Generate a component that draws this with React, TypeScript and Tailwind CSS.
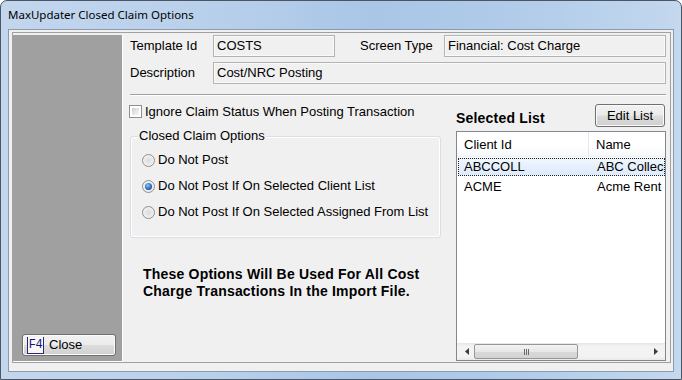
import React from 'react';

const btnClass =
  'rounded-[3px] border border-[#707070] bg-[linear-gradient(180deg,#f2f2f2_0%,#ebebeb_48%,#dddddd_52%,#cfcfcf_100%)] shadow-[inset_0_0_0_1px_#fbfbfb]';

const Field: React.FC<{ value?: string; width: string }> = ({ value = '', width }) => (
  <div
    className={`${width} h-[22px] border border-[#b3b3b3] bg-[#f0f0f0] pl-[3px] text-[13px] leading-[20px] text-black shadow-[inset_0_0_0_1px_#fafafa] whitespace-nowrap overflow-hidden`}
  >
    {value}
  </div>
);

const Radio: React.FC<{ checked?: boolean }> = ({ checked }) => (
  <span className="flex h-[13px] w-[13px] shrink-0 items-center justify-center rounded-full border border-[#8e8f8f] bg-[radial-gradient(circle_at_50%_50%,#dcdcdc_0%,#ececec_55%,#fbfbfb_100%)]">
    {checked && (
      <span className="h-[7px] w-[7px] rounded-full bg-[radial-gradient(circle_at_40%_35%,#8cc4f7_0%,#2a6fc2_55%,#0c3775_100%)]" />
    )}
  </span>
);

const Checkbox: React.FC = () => (
  <span className="flex h-[13px] w-[13px] shrink-0 border border-[#8e8f8f] bg-white p-[2px]">
    <span className="h-full w-full bg-[linear-gradient(135deg,#cbcfd5_0%,#e6e8eb_60%,#f4f5f6_100%)]" />
  </span>
);

const ArrowLeft = () => (
  <svg width="4" height="7" viewBox="0 0 4 7">
    <path d="M4 0 L0 3.5 L4 7 Z" fill="#3c3c3c" />
  </svg>
);

const ArrowRight = () => (
  <svg width="4" height="7" viewBox="0 0 4 7">
    <path d="M0 0 L4 3.5 L0 7 Z" fill="#3c3c3c" />
  </svg>
);

const options = [
  { label: 'Do Not Post', checked: false },
  { label: 'Do Not Post If On Selected Client List', checked: true },
  { label: 'Do Not Post If On Selected Assigned From List', checked: false },
];

const clients = [
  { id: 'ABCCOLL', name: 'ABC Collec', selected: true },
  { id: 'ACME', name: 'Acme Rent', selected: false },
];

export default function App() {
  return (
    <div className="flex h-[380px] w-[682px] flex-col overflow-hidden rounded-t-[7px] border border-[#4b5563] bg-[linear-gradient(90deg,#c2d6ee_0%,#b9d0eb_30%,#a9c6e7_55%,#b3cdea_80%,#c4d8ee_100%)] px-[7px] pb-[7px] font-['Liberation_Sans',Arial,sans-serif] text-[13px] text-black">
      {/* Title bar */}
      <div className="flex h-[28px] shrink-0 items-center font-['Noto_Sans',sans-serif] text-[11.5px] leading-none text-black">
        MaxUpdater Closed Claim Options
      </div>

      {/* Client area */}
      <div className="flex flex-1 flex-col border border-[#8d9aab] bg-[#f0f0f0] pb-[8px] pl-[3px] pr-[2px] pt-[2px]">
        <div className="flex flex-1 border border-[#a0a0a0] bg-[#f0f0f0]">
          {/* Left gray column */}
          <div className="mt-[2px] flex w-[110px] flex-col justify-end border-b border-r border-white bg-[#a0a0a0] pb-[5px] pl-[9px]">
            <button className={`${btnClass} flex h-[22px] w-[94px] items-center pl-[4px] text-[13px]`}>
              <span className="flex h-[17px] w-[17px] items-center justify-center border-x border-b border-[#2a2a6a] bg-[#f6f6fb] font-['Liberation_Mono',monospace] text-[12px] leading-none tracking-[-0.5px] text-[#14146e]">
                F4
              </span>
              <span className="ml-[5px]">Close</span>
            </button>
          </div>

          {/* Right content */}
          <div className="flex flex-1 flex-col pl-[7px]">
            <div className="mt-[2px] flex h-[22px] items-center">
              <span className="w-[83px]">Template Id</span>
              <Field value="COSTS" width="w-[122px]" />
              <span className="ml-[25px] w-[84px]">Screen Type</span>
              <Field value="Financial: Cost Charge" width="w-[222px]" />
            </div>
            <div className="mt-[5px] flex h-[22px] items-center">
              <span className="w-[83px]">Description</span>
              <Field value="Cost/NRC Posting" width="w-[453px]" />
            </div>
            <div className="mt-[10px] w-[536px] border-b border-t border-b-white border-t-[#a0a0a0]" />

            <div className="flex">
              {/* Options column */}
              <div className="flex w-[311px] flex-col">
                <label className="-ml-[1px] mt-[9px] flex h-[13px] items-center gap-[3px] leading-none">
                  <Checkbox />
                  <span>Ignore Claim Status When Posting Transaction</span>
                </label>

                <div className="relative mt-[18px] h-[102px] rounded-[3px] border border-[#d5dfe5] pl-[11px] pt-[10px] shadow-[inset_0_0_0_1px_#ffffff]">
                  <span className="absolute -top-[9px] left-[7px] bg-[#f0f0f0] px-[1px] leading-[16px]">
                    Closed Claim Options
                  </span>
                  {options.map((o) => (
                    <div key={o.label} className="flex h-[26px] items-center gap-[3px]">
                      <Radio checked={o.checked} />
                      <span>{o.label}</span>
                    </div>
                  ))}
                </div>

                <p className="ml-[13px] mt-[28px] text-[14px] font-bold leading-[17px] tracking-[0.2px]">
                  These Options Will Be Used For All Cost
                  <br />
                  Charge Transactions In the Import File.
                </p>
              </div>

              {/* Selected list column */}
              <div className="ml-[15px] flex w-[210px] flex-col">
                <div className="mt-[8px] flex items-start justify-between">
                  <span className="mt-[6px] text-[14px] font-bold leading-[16px] tracking-[0.2px]">Selected List</span>
                  <button className={`${btnClass} mr-[1px] h-[23px] w-[70px] text-[13px]`}>Edit List</button>
                </div>

                <div className="mt-[4px] flex h-[230px] flex-col border border-[#828790] bg-white">
                  <div className="flex h-[25px] shrink-0 border-b border-[#eef0f3] bg-[linear-gradient(180deg,#ffffff_0%,#ffffff_60%,#f6f7f9_100%)]">
                    <div className="w-[132px] border-r border-[#e3e8ee] pl-[7px] leading-[25px]">Client Id</div>
                    <div className="flex-1 pl-[7px] leading-[25px]">Name</div>
                  </div>
                  <div className="flex flex-1 flex-col">
                    {clients.map((c) => (
                      <div key={c.id} className="h-[20px] pl-[1px] pr-0 pt-[1px]">
                        <div
                          className={`flex h-[18px] items-center whitespace-nowrap overflow-hidden ${
                            c.selected
                              ? 'border border-dotted border-[#202020] bg-[linear-gradient(180deg,#f0f6fd_0%,#dceafb_100%)]'
                              : 'border border-transparent'
                          }`}
                        >
                          <span className="w-[131px] shrink-0 pl-[5px]">{c.id}</span>
                          <span className="pl-[7px]">{c.name}</span>
                        </div>
                      </div>
                    ))}
                  </div>
                  <div className="flex h-[17px] shrink-0 items-center bg-[linear-gradient(180deg,#e6e6e6_0%,#f3f3f3_20%,#f3f3f3_80%,#e9e9e9_100%)]">
                    <div className="flex w-[17px] items-center justify-center pl-[2px]">
                      <ArrowLeft />
                    </div>
                    <div className="flex h-[15px] w-[104px] items-center justify-center rounded-[2px] border border-[#979797] bg-[linear-gradient(180deg,#f3f3f3_0%,#e8e8e8_50%,#d9d9d9_51%,#d2d2d2_100%)]">
                      <span className="flex gap-[1px]">
                        <span className="h-[6px] w-[1px] bg-[#6a6a6a]" />
                        <span className="h-[6px] w-[1px] bg-[#6a6a6a]" />
                        <span className="h-[6px] w-[1px] bg-[#6a6a6a]" />
                      </span>
                    </div>
                    <div className="flex-1" />
                    <div className="flex w-[17px] items-center justify-center pr-[2px]">
                      <ArrowRight />
                    </div>
                  </div>
                </div>
              </div>
            </div>
          </div>
        </div>
      </div>
    </div>
  );
}
